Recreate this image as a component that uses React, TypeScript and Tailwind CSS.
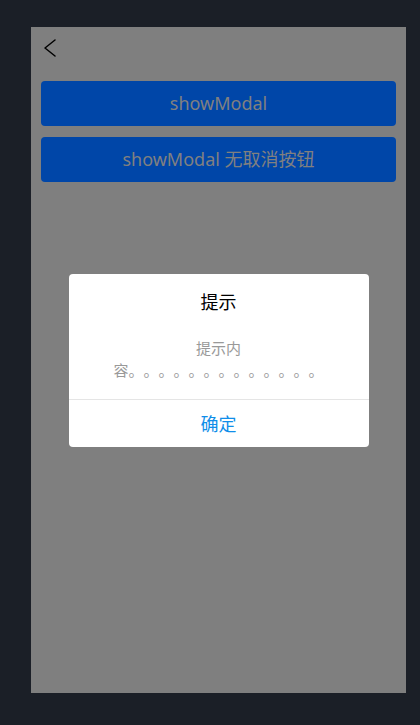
const FONT = { fontFamily: '"Noto Sans", "Noto Sans CJK SC", sans-serif' };
const CJK = { fontFamily: '"Noto Sans CJK SC", sans-serif' };

export default function App() {
  return (
    <div className="flex min-h-[725px] w-[420px] bg-[#1b1f27] pl-[31px] pt-[27px]" style={FONT}>
      <div className="relative flex h-[666px] w-[375px] flex-col bg-white">
        {/* Nav bar */}
        <div className="flex h-[42px] items-center bg-white pl-[13px]">
          <svg width="12" height="18" viewBox="0 0 12 18" fill="none" stroke="#000" strokeWidth="1.5" strokeLinecap="round" strokeLinejoin="round">
            <polyline points="11,1 1,9 11,17" />
          </svg>
        </div>

        {/* Mask */}
        <div className="absolute inset-0 bg-black/50" />

        {/* Buttons (as seen through the mask) */}
        <div className="relative flex flex-col gap-[11px] px-[10px] pt-[12px]">
          <button type="button" className="h-[45px] w-full rounded bg-[#0046a8] text-[18px] text-[#808080]">
            showModal
          </button>
          <button type="button" className="h-[45px] w-full rounded bg-[#0046a8] text-[18px] text-[#808080]">
            showModal 无取消按钮
          </button>
        </div>

        {/* Dialog */}
        <div className="relative flex justify-center pt-[92px]">
          <div className="w-[300px] overflow-hidden rounded bg-white">
            <div className="pt-[13px] text-center text-[18px] leading-[28px] text-black" style={CJK}>提示</div>
            <div
              className="px-[40px] pb-[18px] pt-[22px] text-center text-[15px] leading-[22px] text-[#999] [text-spacing-trim:space-all] [font-feature-settings:'halt'_0,'chws'_0]"
              style={CJK}
            >
              提示内
              <br />
              容。。。。。。。。。。。。。
            </div>
            <div className="flex h-[48px] items-center justify-center border-t border-[#e5e5e5] text-[18px] text-[#108ee9]" style={CJK}>
              确定
            </div>
          </div>
        </div>
      </div>
    </div>
  );
}
